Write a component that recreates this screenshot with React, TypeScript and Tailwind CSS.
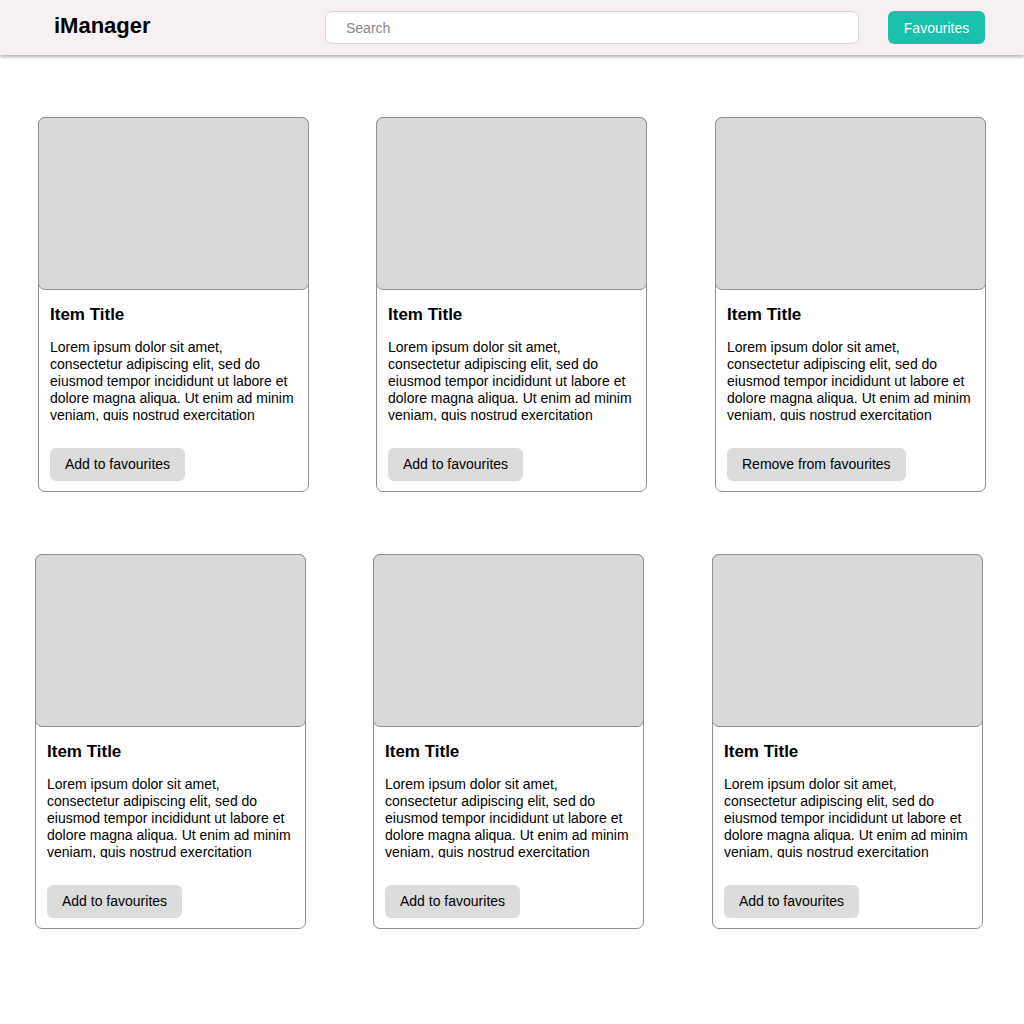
import React from "react";

const LOREM =
  "Lorem ipsum dolor sit amet, consectetur adipiscing elit, sed do eiusmod tempor incididunt ut labore et dolore magna aliqua. Ut enim ad minim veniam, quis nostrud exercitation ullamco laboris nisi ut aliquip ex ea commodo consequat.";

function Card({ action, className = "" }: { action: string; className?: string }) {
  return (
    <div className={"w-[271px] h-[375px] border border-[#8f8f8f] rounded-[7px] bg-white flex flex-col " + className}>
      <div className="-mx-px -mt-px h-[173px] bg-[#d9d9d9] border border-[#8f8f8f] rounded-[7px]" />
      <div className="px-[11px] flex flex-col">
        <h2 className="mt-[15px] text-[17px] leading-[20px] font-bold text-black">Item Title</h2>
        <p className="mt-[14px] h-[82px] overflow-hidden text-[14px] leading-[17px] text-black">{LOREM}</p>
        <div className="mt-[27px]">
          <button className="h-[33px] px-[15px] rounded-[6px] bg-[#dcdcdc] text-[14px] text-black">{action}</button>
        </div>
      </div>
    </div>
  );
}

export default function App() {
  return (
    <div className="min-h-[1024px] bg-white" style={{ fontFamily: '"Liberation Sans", Arial, sans-serif' }}>
      <header className="h-[55px] bg-[#f7f0f2] flex items-center shadow-[0_2px_3px_rgba(0,0,0,0.3)] relative">
        <div className="w-[325px] pl-[54px] pb-[4px] text-[22px] font-bold text-black">iManager</div>
        <div className="w-[534px] h-[33px] bg-white border border-[#d6d6d6] rounded-[7px] flex items-center pl-[20px] pt-[1px] text-[14px] text-[#8a8a8a]">
          Search
        </div>
        <button className="ml-[29px] w-[97px] h-[33px] pt-[1px] rounded-[6px] bg-[#19c1ad] text-white text-[14px]">Favourites</button>
      </header>
      <main className="pt-[62px] flex flex-col gap-[62px]">
        <div className="ml-[38px] flex gap-[67px]">
          <Card action="Add to favourites" />
          <Card action="Add to favourites" />
          <Card action="Remove from favourites" className="ml-px" />
        </div>
        <div className="ml-[35px] flex gap-[67px]">
          <Card action="Add to favourites" />
          <Card action="Add to favourites" />
          <Card action="Add to favourites" className="ml-px" />
        </div>
      </main>
    </div>
  );
}
